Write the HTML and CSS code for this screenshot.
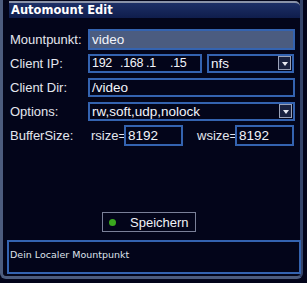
FILE: index.html
```html
<!DOCTYPE html>
<html lang="de">
<head>
    <meta charset="UTF-8">
    <title>Automount Edit</title>
    <link rel="stylesheet" href="styles.css">
</head>
<body>
    <div class="window">
        <div class="title-bar">Automount Edit</div>

        <div class="form">
            <div class="row">
                <span class="label">Mountpunkt:</span>
                <div class="field filled wide">video</div>
            </div>
            <div class="row">
                <span class="label">Client IP:</span>
                <div class="field ip">
                    <span class="oct">192</span><span class="oct">.168</span><span class="oct">.1</span><span class="oct">.15</span>
                </div>
                <div class="field select fs">
                    <span>nfs</span>
                    <span class="arrow"></span>
                </div>
            </div>
            <div class="row">
                <span class="label">Client Dir:</span>
                <div class="field wide">/video</div>
            </div>
            <div class="row">
                <span class="label">Options:</span>
                <div class="field select wide">
                    <span>rw,soft,udp,nolock</span>
                    <span class="arrow"></span>
                </div>
            </div>
            <div class="row">
                <span class="label">BufferSize:</span>
                <span class="sub-label">rsize=</span>
                <div class="field small">8192</div>
                <span class="sub-label wsize">wsize=</span>
                <div class="field small">8192</div>
            </div>
        </div>

        <div class="actions">
            <button class="save-button"><span class="dot"></span>Speichern</button>
        </div>

        <div class="status">Dein Localer Mountpunkt</div>
    </div>
</body>
</html>
```

FILE: styles.css
```css
* {
    margin: 0;
    padding: 0;
    box-sizing: border-box;
    font-family: 'Liberation Sans', Arial, sans-serif;
}

body {
    background-color: #02041a;
    width: 307px;
    height: 283px;
    overflow: hidden;
}

.window {
    width: 303px;
    height: 279px;
    background-color: #03051a;
    border-left: 3px solid #4c5c7e;
    border-right: 3px solid #34446a;
    border-bottom: 3px solid #4c5c7e;
    border-radius: 0 0 6px 6px;
    display: flex;
    flex-direction: column;
}

/* Title bar */
.title-bar {
    margin: 1px 0 0 6px;
    height: 17px;
    border-top: 2px solid #8a92a8;
    border-radius: 0 5px 0 0;
    background: linear-gradient(180deg, #1d2f66 0%, #0f1d4c 100%);
    color: #fff;
    font-family: 'DejaVu Sans', sans-serif;
    font-size: 11.5px;
    font-weight: bold;
    padding-left: 2px;
    line-height: 15px;
}

/* Form */
.form {
    display: flex;
    flex-direction: column;
    gap: 4px;
    padding: 11px 5px 0 7px;
}

.row {
    display: flex;
    align-items: center;
    height: 20px;
}

.label {
    width: 78px;
    color: #e4e6ee;
    font-size: 13px;
}

.field {
    height: 19px;
    border: 2px solid #3463b0;
    color: #f2f4fa;
    font-size: 13.5px;
    line-height: 15px;
    padding-left: 2px;
    display: flex;
    align-items: center;
}

.field.filled {
    background-color: #4b5c80;
    height: 21px;
}

.field.wide {
    width: 207px;
}

.field.ip {
    width: 114px;
    font-size: 12.5px;
    letter-spacing: -0.3px;
}

.oct {
    flex-shrink: 0;
    width: 28px;
}

.oct:nth-child(2) {
    width: 26px;
}

.oct:nth-child(3) {
    width: 24px;
}

.field.fs {
    width: 87px;
    margin-left: 5px;
}

.select {
    justify-content: space-between;
    padding-right: 1px;
}

.arrow {
    width: 13px;
    height: 14px;
    border: 1px solid #9aa2b8;
    background-color: #1a2240;
    position: relative;
}

.arrow::after {
    content: '';
    position: absolute;
    left: 3px;
    top: 5px;
    border-left: 3px solid transparent;
    border-right: 3px solid transparent;
    border-top: 4px solid #e8eaf2;
}

.sub-label {
    color: #e4e6ee;
    font-size: 13px;
    margin-left: 3px;
    width: 33px;
}

.sub-label.wsize {
    margin-left: 14px;
    width: 38px;
}

.field.small {
    width: 59px;
    height: 21px;
}

/* Save button */
.actions {
    display: flex;
    justify-content: center;
    margin-top: 67px;
    padding-right: 5px;
}

.save-button {
    width: 94px;
    height: 20px;
    background-color: #03051a;
    border: 1px solid #7a8098;
    color: #f0f2f8;
    font-size: 13px;
    display: flex;
    align-items: center;
    gap: 14px;
    padding-left: 6px;
}

.dot {
    width: 7px;
    height: 7px;
    border-radius: 50%;
    background-color: #3aa81e;
}

/* Status box */
.status {
    margin: 8px 0 0 4px;
    width: 294px;
    height: 34px;
    border: 2px solid #3463b0;
    color: #dfe2ea;
    font-family: 'DejaVu Sans', sans-serif;
    font-size: 9.5px;
    padding: 7px 0 0 1px;
}
```
